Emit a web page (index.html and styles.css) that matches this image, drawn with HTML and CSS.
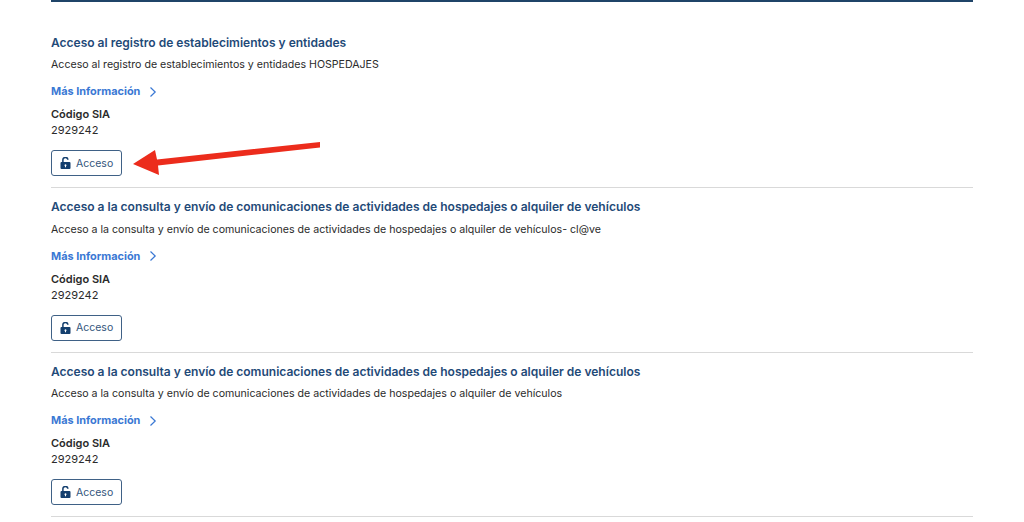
FILE: index.html
```html
<!DOCTYPE html>
<html lang="es">
<head>
<meta charset="utf-8">
<title>Acceso</title>
<link rel="stylesheet" href="styles.css">
</head>
<body>
<main class="list">
  <section class="item">
    <h2 class="title">Acceso al registro de establecimientos y entidades</h2>
    <p class="desc">Acceso al registro de establecimientos y entidades HOSPEDAJES</p>
    <a class="more" href="#">Más Información<svg class="chev" viewBox="0 0 8 12" width="8" height="12"><path d="M1.5 1.5 6.2 6 1.5 10.5"/></svg></a>
    <div class="code-label">Código SIA</div>
    <div class="code">2929242</div>
    <a class="btn" href="#"><svg class="lock" viewBox="0 0 11 12" width="11" height="12"><path fill-rule="evenodd" d="M1.5 5h8a1 1 0 0 1 1 1v5a1 1 0 0 1-1 1h-8a1 1 0 0 1-1-1V6a1 1 0 0 1 1-1zM5.5 7.2a1.1 1.1 0 0 0-.5 2V10.3h1V9.2a1.1 1.1 0 0 0-.5-2z"/><path class="shackle" d="M2.9 5.2V3.2a2.5 2.5 0 0 1 5-.5"/></svg>Acceso</a>
  </section>
  <section class="item">
    <h2 class="title">Acceso a la consulta y envío de comunicaciones de actividades de hospedajes o alquiler de vehículos</h2>
    <p class="desc">Acceso a la consulta y envío de comunicaciones de actividades de hospedajes o alquiler de vehículos- cl@ve</p>
    <a class="more" href="#">Más Información<svg class="chev" viewBox="0 0 8 12" width="8" height="12"><path d="M1.5 1.5 6.2 6 1.5 10.5"/></svg></a>
    <div class="code-label">Código SIA</div>
    <div class="code">2929242</div>
    <a class="btn" href="#"><svg class="lock" viewBox="0 0 11 12" width="11" height="12"><path fill-rule="evenodd" d="M1.5 5h8a1 1 0 0 1 1 1v5a1 1 0 0 1-1 1h-8a1 1 0 0 1-1-1V6a1 1 0 0 1 1-1zM5.5 7.2a1.1 1.1 0 0 0-.5 2V10.3h1V9.2a1.1 1.1 0 0 0-.5-2z"/><path class="shackle" d="M2.9 5.2V3.2a2.5 2.5 0 0 1 5-.5"/></svg>Acceso</a>
  </section>
  <section class="item">
    <h2 class="title">Acceso a la consulta y envío de comunicaciones de actividades de hospedajes o alquiler de vehículos</h2>
    <p class="desc">Acceso a la consulta y envío de comunicaciones de actividades de hospedajes o alquiler de vehículos</p>
    <a class="more" href="#">Más Información<svg class="chev" viewBox="0 0 8 12" width="8" height="12"><path d="M1.5 1.5 6.2 6 1.5 10.5"/></svg></a>
    <div class="code-label">Código SIA</div>
    <div class="code">2929242</div>
    <a class="btn" href="#"><svg class="lock" viewBox="0 0 11 12" width="11" height="12"><path fill-rule="evenodd" d="M1.5 5h8a1 1 0 0 1 1 1v5a1 1 0 0 1-1 1h-8a1 1 0 0 1-1-1V6a1 1 0 0 1 1-1zM5.5 7.2a1.1 1.1 0 0 0-.5 2V10.3h1V9.2a1.1 1.1 0 0 0-.5-2z"/><path class="shackle" d="M2.9 5.2V3.2a2.5 2.5 0 0 1 5-.5"/></svg>Acceso</a>
  </section>
</main>
<svg class="arrow" viewBox="0 0 190 36" width="190" height="36"><path d="M1 24 23 10 25 19.5 188 2 188 7.5 26 25.5 27 35z"/></svg>
</body>
</html>
```

FILE: styles.css
```css
* { box-sizing: border-box; }
html, body { margin: 0; height: 100%; background: #fff; overflow: hidden; }
body { font-family: Inter, "Liberation Sans", sans-serif; color: #2b2b2b; position: relative; }
.list { margin: 0 51px; width: 922px; border-top: 2px solid #1f4468; padding-top: 32.5px; }
.item { border-bottom: 1px solid #d9d9d9; padding: 0 0 11px; }
.item + .item { padding-top: 11px; }
.title { margin: 0 0 7.5px; font-size: 12.02px; line-height: 15px; font-weight: 600; color: #1f4a78; }
.desc { margin: 0 0 12px; font-size: 10.62px; line-height: 15px; color: #2b2b2b; }
.more { display: flex; align-items: center; gap: 9px; font-size: 10.9px; line-height: 15px; font-weight: 700; color: #3a78d4; text-decoration: none; margin-bottom: 8px; }
.chev { fill: none; stroke: #3a78d4; stroke-width: 1.2; }
.code-label { font-size: 11px; line-height: 15px; font-weight: 600; color: #2b2b2b; margin-bottom: 1px; }
.code { font-size: 11px; line-height: 15px; color: #2b2b2b; margin-bottom: 12px; }
.btn { display: flex; align-items: center; gap: 5px; width: 71px; height: 26px; padding-left: 8px; border: 1px solid #3f6186; border-radius: 3px; font-size: 10.5px; color: #33557c; text-decoration: none; }
.lock { fill: #143f6e; flex: none; }
.lock .shackle { fill: none; stroke: #143f6e; stroke-width: 1.5; }
.arrow { position: absolute; left: 132px; top: 140px; fill: #ec2c1c; }
```
